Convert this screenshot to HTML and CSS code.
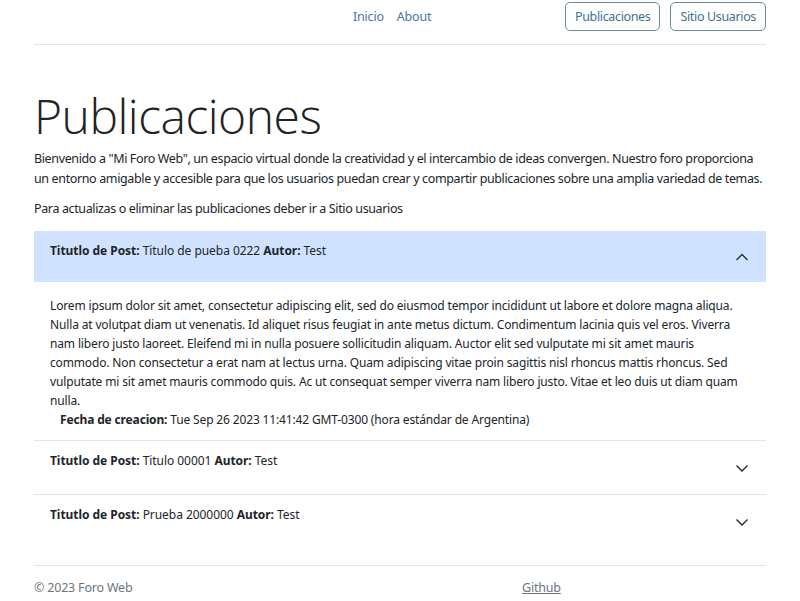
FILE: index.html
```html
<!DOCTYPE html>
<html lang="es">
<head>
<meta charset="utf-8">
<title>Publicaciones</title>
<link rel="stylesheet" href="styles.css">
</head>
<body>
<div class="container">
  <header class="topbar">
    <nav class="links">
      <a href="#">Inicio</a>
      <a href="#">About</a>
    </nav>
    <div class="actions">
      <a class="btn" href="#">Publicaciones</a>
      <a class="btn" href="#">Sitio Usuarios</a>
    </div>
  </header>

  <main>
    <h1 class="title">Publicaciones</h1>
    <p class="intro">Bienvenido a "Mi Foro Web", un espacio virtual donde la creatividad y el intercambio de ideas convergen. Nuestro foro proporciona un entorno amigable y accesible para que los usuarios puedan crear y compartir publicaciones sobre una amplia variedad de temas.</p>
    <p class="intro">Para actualizas o eliminar las publicaciones deber ir a Sitio usuarios</p>

    <div class="accordion">
      <div class="item">
        <div class="head open">
          <span class="head-text"><b>Titutlo de Post:</b> Titulo de pueba 0222 <b>Autor:</b> Test</span>
          <svg class="chev" width="16" height="16" viewBox="0 0 16 16"><path d="M2.5 11 L8 5.5 L13.5 11" fill="none" stroke="#1f2a38" stroke-width="1.3"/></svg>
        </div>
        <div class="body">
          <p>Lorem ipsum dolor sit amet, consectetur adipiscing elit, sed do eiusmod tempor incididunt ut labore et dolore magna aliqua. Nulla at volutpat diam ut venenatis. Id aliquet risus feugiat in ante metus dictum. Condimentum lacinia quis vel eros. Viverra nam libero justo laoreet. Eleifend mi in nulla posuere sollicitudin aliquam. Auctor elit sed vulputate mi sit amet mauris commodo. Non consectetur a erat nam at lectus urna. Quam adipiscing vitae proin sagittis nisl rhoncus mattis rhoncus. Sed vulputate mi sit amet mauris commodo quis. Ac ut consequat semper viverra nam libero justo. Vitae et leo duis ut diam quam nulla.</p>
          <p class="date"><b>Fecha de creacion:</b> Tue Sep 26 2023 11:41:42 GMT-0300 (hora estándar de Argentina)</p>
        </div>
      </div>
      <div class="item">
        <div class="head">
          <span class="head-text"><b>Titutlo de Post:</b> Titulo 00001 <b>Autor:</b> Test</span>
          <svg class="chev" width="16" height="16" viewBox="0 0 16 16"><path d="M2.5 5.5 L8 11 L13.5 5.5" fill="none" stroke="#222" stroke-width="1.3"/></svg>
        </div>
      </div>
      <div class="item last">
        <div class="head">
          <span class="head-text"><b>Titutlo de Post:</b> Prueba 2000000 <b>Autor:</b> Test</span>
          <svg class="chev" width="16" height="16" viewBox="0 0 16 16"><path d="M2.5 5.5 L8 11 L13.5 5.5" fill="none" stroke="#222" stroke-width="1.3"/></svg>
        </div>
      </div>
    </div>
  </main>

  <footer class="footer">
    <span class="copy">© 2023 Foro Web</span>
    <a class="gh" href="#">Github</a>
  </footer>
</div>
</body>
</html>
```

FILE: styles.css
```css
* { box-sizing: border-box; }
html, body { margin: 0; padding: 0; background: #fff; }
body {
  font-family: "Noto Sans", "Open Sans", sans-serif;
  font-size: 12.5px;
  line-height: 20px;
  letter-spacing: -0.3px;
  color: #212529;
}
.container {
  width: 732px;
  margin: 0 auto;
}
.topbar {
  display: flex;
  align-items: flex-start;
  height: 45px;
  padding-top: 2px;
  border-bottom: 1px solid #e3e3e3;
}
.links {
  display: flex;
  gap: 13px;
  margin-left: 319px;
  padding-top: 5px;
}
.links a {
  color: #4a74a6;
  text-decoration: none;
  font-size: 12.5px;
  letter-spacing: -0.2px;
}
.actions {
  margin-left: auto;
  display: flex;
  gap: 10px;
}
.btn {
  display: block;
  height: 29px;
  line-height: 27px;
  padding: 0 9px;
  border: 1px solid #6a8c99;
  border-radius: 5px;
  color: #44708a;
  text-decoration: none;
  font-size: 12.5px;
  letter-spacing: -0.35px;
}
main { padding-top: 42px; }
.title {
  margin: 0;
  font-family: "Open Sans", "Noto Sans", sans-serif;
  font-weight: 300;
  font-size: 48px;
  line-height: 58px;
  color: #222;
  letter-spacing: -0.5px;
}
.intro {
  margin: 4px 0 10px;
  letter-spacing: -0.37px;
}
.accordion { margin-top: 12px; }
.item { border-bottom: 1px solid #e5e5e5; }
.item.last { border-bottom: none; }
.head {
  display: flex;
  align-items: center;
  justify-content: space-between;
  padding: 10px 16px 10px 16px;
  height: 53px;
}
.head.open { background: #cfe2ff; height: 51px; }
.head-text {
  align-self: flex-start;
  font-size: 12px;
  letter-spacing: -0.05px;
}
.head-text b { font-weight: 700; }
.body {
  padding: 14px 16px 11px;
  font-size: 12px;
  line-height: 19px;
  letter-spacing: -0.15px;
}
.body p { margin: 0; }
.body .date { padding-left: 10px; }
.footer {
  margin-top: 17px;
  border-top: 1px solid #e3e3e3;
  display: flex;
  padding-top: 12px;
  font-size: 12.5px;
  letter-spacing: -0.2px;
  color: #6c757d;
}
.copy { width: 488px; }
.gh { color: #6c757d; }
```
